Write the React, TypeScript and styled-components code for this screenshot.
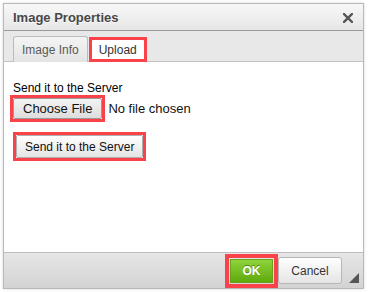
import React from 'react';
import styled, { createGlobalStyle } from 'styled-components';

const GlobalStyle = createGlobalStyle`
  html, body {
    margin: 0;
    padding: 0;
    background: #ffffff;
  }
  body {
    font-family: "Liberation Sans", Arial, sans-serif;
    color: #333;
  }
`;

const mark = '#f9424a';

const Page = styled.div`
  width: 368px;
  height: 292px;
  padding: 3px 0 0 3px;
  box-sizing: border-box;
`;

const Dialog = styled.div`
  width: 361px;
  height: 286px;
  box-sizing: border-box;
  border: 1px solid #b8b8b8;
  box-shadow: 0 0 3px rgba(0, 0, 0, 0.15);
  display: flex;
  flex-direction: column;
  background: #fff;
`;

const TitleBar = styled.div`
  height: 26px;
  flex: none;
  display: flex;
  align-items: center;
  justify-content: space-between;
  padding: 0 10px 0 9px;
  background: linear-gradient(#f8f8f8, #e6e6e6);
  border-bottom: 1px solid #999;
`;

const Title = styled.span`
  font-size: 13px;
  font-weight: bold;
  color: #474747;
  text-shadow: 0 1px 0 rgba(255, 255, 255, 0.75);
`;

const Close = styled.span`
  display: flex;
  width: 10px;
  height: 10px;
  margin-top: 1px;
`;

const TabBar = styled.div`
  height: 31px;
  flex: none;
  box-sizing: border-box;
  display: flex;
  align-items: flex-end;
  gap: 1px;
  padding-left: 9px;
  background: #e8e8e8;
  border-bottom: 1px solid #c4c4c4;
`;

const Tab = styled.div<{ $active?: boolean }>`
  height: ${p => (p.$active ? '19px' : '26px')};
  display: flex;
  align-items: center;
  box-sizing: border-box;
  padding: ${p => (p.$active ? '0 7px' : '0 8px')};
  font-size: 12px;
  color: ${p => (p.$active ? '#333' : '#595959')};
  background: ${p => (p.$active ? '#fff' : 'linear-gradient(#f4f4f4, #e4e4e4)')};
  border: ${p => (p.$active ? 'none' : '1px solid #bcbcbc')};
  border-bottom: none;
  border-radius: 3px 3px 0 0;
  margin-bottom: ${p => (p.$active ? '0' : '-1px')};
`;

const Marked = styled.div<{ $thick?: boolean; $inTabs?: boolean }>`
  display: inline-flex;
  border: ${p => (p.$thick ? '4px' : '3px')} solid ${mark};
  margin-bottom: ${p => (p.$inTabs ? '-1px' : '0')};
`;

const Body = styled.div`
  flex: 1;
  padding: 19px 6px 0 9px;
  background: #fff;
  font-size: 12px;
  color: #000;
`;

const Label = styled.div`
  line-height: 14px;
`;

const FileRow = styled.div`
  display: flex;
  align-items: center;
  margin-left: -3px;
`;

const FileButton = styled.span`
  height: 19px;
  display: flex;
  align-items: center;
  padding: 0 9px;
  font-size: 13px;
  color: #111;
  background: linear-gradient(#f4f4f4, #dddddd);
  border: 1px solid #9a9a9a;
  border-radius: 2px;
`;

const NoFile = styled.span`
  font-size: 13px;
  color: #111;
  margin-left: 3px;
`;

const SendRow = styled.div`
  margin-top: 10px;
`;

const SendButton = styled.span`
  height: 21px;
  display: flex;
  align-items: center;
  padding: 0 8px;
  font-size: 12px;
  color: #111;
  background: linear-gradient(#ffffff, #e4e4e4);
  border: 1px solid #b0b0b0;
  border-radius: 2px;
`;

const Footer = styled.div`
  height: 36px;
  flex: none;
  box-sizing: border-box;
  display: flex;
  align-items: center;
  justify-content: flex-end;
  padding-right: 21px;
  background: linear-gradient(#e6e6e6, #d3d3d3);
  border-top: 1px solid #bdbdbd;
  position: relative;
`;

const OkButton = styled.span`
  width: 43px;
  height: 24px;
  display: flex;
  align-items: center;
  justify-content: center;
  font-size: 12px;
  font-weight: bold;
  color: #fff;
  text-shadow: 0 -1px 0 #55830c;
  background: linear-gradient(#8ed33c, #5ea90c);
  border: 1px solid #6aa020;
  box-sizing: border-box;
  margin: 1px;
`;

const CancelButton = styled.span`
  width: 64px;
  height: 27px;
  box-sizing: border-box;
  display: flex;
  align-items: center;
  justify-content: center;
  font-size: 12px;
  color: #333;
  background: linear-gradient(#ffffff, #e4e4e4);
  border: 1px solid #b6b6b6;
  border-radius: 3px;
  margin-left: 0;
`;

const Resizer = styled.span`
  position: absolute;
  right: 4px;
  bottom: 5px;
  width: 0;
  height: 0;
  border-left: 10px solid transparent;
  border-bottom: 10px solid #555;
`;

const CloseIcon = () => (
  <svg width="10" height="10" viewBox="0 0 10 10">
    <path d="M1 1 L9 9 M9 1 L1 9" stroke="#555" strokeWidth="2.4" strokeLinecap="square" />
  </svg>
);

export default function App() {
  return (
    <>
      <GlobalStyle />
      <Page>
        <Dialog>
          <TitleBar>
            <Title>Image Properties</Title>
            <Close><CloseIcon /></Close>
          </TitleBar>
          <TabBar>
            <Tab>Image Info</Tab>
            <Marked $inTabs>
              <Tab $active>Upload</Tab>
            </Marked>
          </TabBar>
          <Body>
            <Label>Send it to the Server</Label>
            <FileRow>
              <Marked>
                <FileButton>Choose File</FileButton>
              </Marked>
              <NoFile>No file chosen</NoFile>
            </FileRow>
            <SendRow>
              <Marked>
                <SendButton>Send it to the Server</SendButton>
              </Marked>
            </SendRow>
          </Body>
          <Footer>
            <Marked $thick>
              <OkButton>OK</OkButton>
            </Marked>
            <CancelButton>Cancel</CancelButton>
            <Resizer />
          </Footer>
        </Dialog>
      </Page>
    </>
  );
}
